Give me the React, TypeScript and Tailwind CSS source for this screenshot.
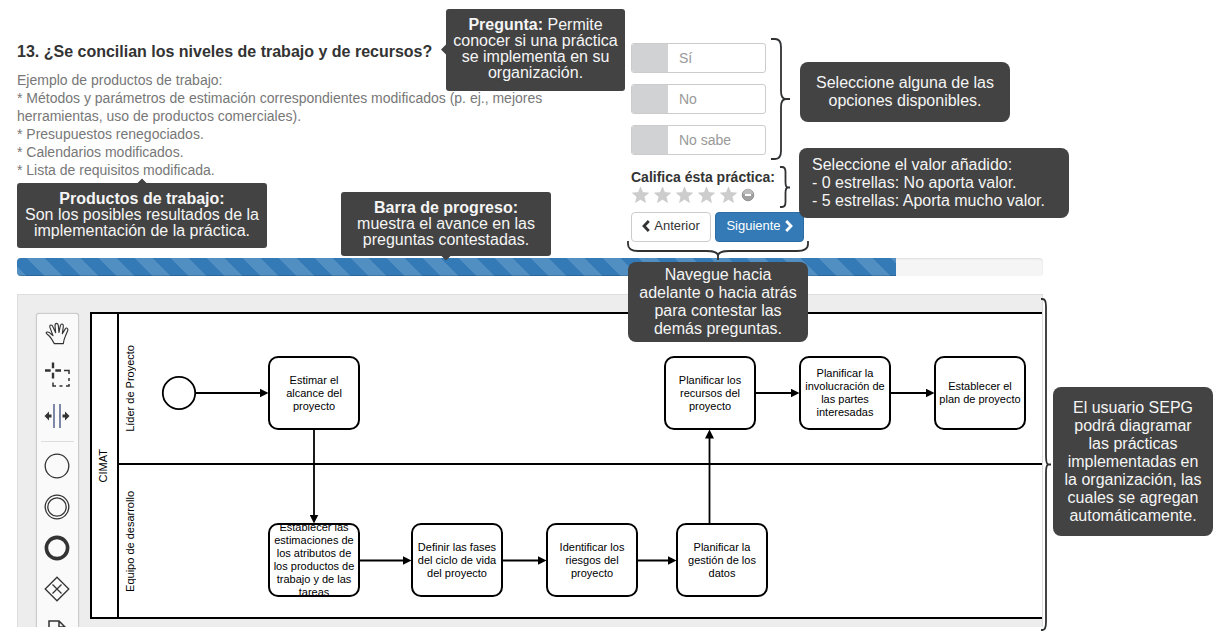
import { useState } from "react";
import type { ReactNode } from "react";

const OPTIONS = ["Sí", "No", "No sabe"];

const PRODUCTS = [
  "Ejemplo de productos de trabajo:",
  "* Métodos y parámetros de estimación correspondientes modificados (p. ej., mejores herramientas, uso de productos comerciales).",
  "* Presupuestos renegociados.",
  "* Calendarios modificados.",
  "* Lista de requisitos modificada.",
];

const TASKS = [
  { place: "left-[250px] top-[61px]", text: "Estimar el\nalcance del\nproyecto" },
  { place: "left-[646px] top-[61px]", text: "Planificar los\nrecursos del\nproyecto" },
  { place: "left-[781px] top-[61px]", text: "Planificar la\ninvolucración de\nlas partes\ninteresadas" },
  { place: "left-[916px] top-[61px]", text: "Establecer el\nplan de proyecto" },
  {
    place: "left-[250px] top-[228px]",
    text: "Establecer las\nestimaciones de\nlos atributos de\nlos productos de\ntrabajo y de las\ntareas",
  },
  { place: "left-[393px] top-[228px]", text: "Definir las fases\ndel ciclo de vida\ndel proyecto" },
  { place: "left-[528px] top-[228px]", text: "Identificar los\nriesgos del\nproyecto" },
  { place: "left-[658px] top-[228px]", text: "Planificar la\ngestión de los\ndatos" },
];

const FLOWS = [
  "M178 98H246",
  "M737 98H777",
  "M872 98H912",
  "M341 265.5H389",
  "M484 265.5H524",
  "M619 265.5H654",
  "M296 134V224",
  "M691.5 229V139",
];

function Option({ label, checked, onChange }: { label: string; checked: boolean; onChange: () => void }) {
  return (
    <label className="flex h-[30px] w-[135px] cursor-pointer overflow-hidden rounded-[3px] border border-[#ccc] bg-white text-sm text-[#999]">
      <input
        type="radio"
        name="respuesta"
        checked={checked}
        onChange={onChange}
        className="w-9 shrink-0 appearance-none bg-[#d1d2d4] checked:bg-[#337ab7]"
      />
      <span className="self-center pl-[11px]">{label}</span>
    </label>
  );
}

function Callout({ className, children }: { className: string; children: ReactNode }) {
  return (
    <div className={`absolute flex flex-col justify-center bg-[#434343] text-base text-[#f5f5f5] ${className}`}>
      {children}
    </div>
  );
}

function Tool({ label, children }: { label: string; children: ReactNode }) {
  return (
    <button type="button" aria-label={label} className="flex h-[41px] w-full shrink-0 items-center justify-center pb-[2px] pr-[2px]">
      <svg width="30" height="30" viewBox="0 0 30 30" fill="none" stroke="#333" strokeWidth="1.3">
        {children}
      </svg>
    </button>
  );
}

function Palette() {
  return (
    <div className="mt-px flex h-[400px] w-[43px] shrink-0 flex-col rounded-[3px] border border-[#ccc] bg-[#fafafa] shadow-[0_0_1px_#bbb]">
      <Tool label="Mano">
        <g transform="scale(0.33333) translate(-126 -86)" strokeWidth="3.4" strokeLinejoin="round">
          <path d="M163 160L154 145Q148 136 141 131Q136 127 141 125Q148 124 153 131L159 136L150 112Q148 105 152 104Q157 103 159 110L167 127L165 106Q165 99 170 99Q174 99 175 106L177 126L181 106Q183 100 187 101Q191 103 190 109L187 130L195 117Q199 111 202 114Q205 117 203 121L196 138Q192 146 190 160Z" />
        </g>
      </Tool>
      <Tool label="Lazo">
        <path d="M3 10.500H8.700M13.300 10.500H19M11 2.500V8.200M11 12.800V18.500" strokeWidth="2.400" />
        <path d="M22 10.500H27V14M27 18V21M27 24V26H24M20.500 26H17.500M14 26H11V22.500" strokeWidth="1.500" />
      </Tool>
      <Tool label="Espacio">
        <path d="M12 3V27M18 3V27" stroke="#3b4a7a" />
        <path d="M2.500 15L7 10.500V13.500H9.500V16.500H7V19.500ZM27.500 15L23 10.500V13.500H20.500V16.500H23V19.500Z" fill="#333" stroke="none" />
      </Tool>
      <hr className="mx-1 my-1 border-t border-[#ddd]" />
      <Tool label="Evento de inicio">
        <circle cx="15" cy="15" r="11.800" />
      </Tool>
      <Tool label="Evento intermedio">
        <circle cx="15" cy="15" r="11.800" />
        <circle cx="15" cy="15" r="9.200" />
      </Tool>
      <Tool label="Evento de fin">
        <circle cx="15" cy="15" r="10.600" strokeWidth="3.600" />
      </Tool>
      <Tool label="Compuerta">
        <path d="M15 3.200L26.800 15L15 26.800L3.200 15Z" />
        <path d="M10.500 10.500L19.500 19.500M19.500 10.500L10.500 19.500" />
      </Tool>
      <Tool label="Objeto de datos">
        <path d="M7 6H17L23 12V28H7ZM17 6V12H23" strokeWidth="1.500" />
      </Tool>
    </div>
  );
}

function Diagram() {
  return (
    <section className="relative mt-[18px] flex h-[333px] overflow-hidden border border-b-0 border-[#ddd] bg-[#ededed] pl-[18px] pt-[17px] text-[11px] leading-[13px] text-black">
      <Palette />
      <div className="ml-[11px] flex h-[307px] flex-1 border-2 border-r-0 border-black bg-white">
        <div className="flex w-[27px] shrink-0 items-center justify-center border-r-2 border-black pr-[2px]">
          <span className="rotate-180 [writing-mode:vertical-rl]">CIMAT</span>
        </div>
        <div className="flex flex-1 flex-col">
          <div className="flex h-[151px] shrink-0 items-center border-b-2 border-black pl-[5px]">
            <span className="rotate-180 [writing-mode:vertical-rl]">Líder de Proyecto</span>
          </div>
          <div className="flex flex-1 items-center pl-[5px]">
            <span className="rotate-180 [writing-mode:vertical-rl]">Equipo de desarrollo</span>
          </div>
        </div>
      </div>
      {TASKS.map((task) => (
        <div
          key={task.text}
          className={`absolute flex h-[74px] w-[92px] items-center justify-center whitespace-pre rounded-[10px] border-2 border-black bg-white text-center ${task.place}`}
        >
          {task.text}
        </div>
      ))}
      <svg className="pointer-events-none absolute left-0 top-0" width="1024" height="332" fill="none" stroke="#000" strokeWidth="1.800">
        <defs>
          <marker id="flecha" viewBox="0 0 10 10" refX="5" refY="5" markerWidth="9" markerHeight="9" markerUnits="userSpaceOnUse" orient="auto">
            <path d="M0 0L10 5L0 10Z" fill="#000" stroke="none" />
          </marker>
        </defs>
        <circle cx="161" cy="98" r="16.200" fill="#fff" />
        {FLOWS.map((d) => (
          <path key={d} d={d} markerEnd="url(#flecha)" />
        ))}
      </svg>
    </section>
  );
}

function Rating() {
  const [stars, setStars] = useState(0);
  return (
    <div className="flex h-[18px] items-center">
      {[1, 2, 3, 4, 5].map((n) => (
        <button key={n} type="button" aria-label={`${n} estrellas`} onClick={() => setStars(n)} className="w-[22px]">
          <svg width="20" height="18" viewBox="0 0 20 18" fill={n <= stars ? "#f0ad4e" : "#cdcdcd"} stroke="#c0c0c0" strokeWidth="0.500">
            <path d="M9.500 1L11.700 6.500L17.600 6.900L13.100 10.700L14.500 16.500L9.500 13.300L4.500 16.500L5.900 10.700L1.400 6.900L7.300 6.500Z" />
          </svg>
        </button>
      ))}
      <button type="button" aria-label="Quitar calificación" onClick={() => setStars(0)}>
        <svg width="14" height="14" viewBox="0 0 14 14">
          <circle cx="7" cy="7" r="5.800" fill="#a0a0a0" stroke="#858585" strokeWidth="0.800" />
          <path d="M2 6A5 5 0 0 1 12 6Z" fill="#bbb" />
          <path d="M4 7H10" stroke="#fff" strokeWidth="2" />
        </svg>
      </button>
    </div>
  );
}

export default function App() {
  const [answer, setAnswer] = useState("");
  return (
    <main className="relative min-h-screen bg-white pl-[17px] pr-[184px] pt-[41px] font-['Liberation_Sans',Arial,sans-serif] text-[#333]">
      <div className="flex">
        <div className="w-[614px] shrink-0 pr-10">
          <h1 className="text-base font-bold leading-[22px]">13. ¿Se concilian los niveles de trabajo y de recursos?</h1>
          <div className="mt-2 text-sm leading-[18px] text-[#777]">
            {PRODUCTS.map((line) => (
              <p key={line}>{line}</p>
            ))}
          </div>
        </div>
        <form className="shrink-0 pt-[2px]" onSubmit={(e) => e.preventDefault()}>
          <div className="flex flex-col gap-[11px]">
            {OPTIONS.map((o) => (
              <Option key={o} label={o} checked={answer === o} onChange={() => setAnswer(o)} />
            ))}
          </div>
          <p className="mt-[13px] text-sm font-bold leading-[18px]">Califica ésta práctica:</p>
          <Rating />
          <div className="mt-2 flex gap-1 text-[13px]">
            <button type="button" className="flex h-[30px] w-20 items-center justify-center gap-1 rounded border border-[#ccc] bg-white pb-[2px]">
              <svg width="8" height="12" viewBox="0 0 8 12" fill="none" stroke="#333" strokeWidth="2.800">
                <path d="M6.800 1L2 6L6.800 11" />
              </svg>
              Anterior
            </button>
            <button type="button" className="flex h-[30px] w-[89px] items-center justify-center gap-1 rounded border border-[#2e6da4] bg-[#337ab7] pb-[2px] text-white">
              Siguiente
              <svg width="8" height="12" viewBox="0 0 8 12" fill="none" stroke="#fff" strokeWidth="2.800">
                <path d="M1.200 1L6 6L1.200 11" />
              </svg>
            </button>
          </div>
        </form>
      </div>

      <div
        role="progressbar"
        aria-label="Progreso"
        aria-valuenow={86}
        className="mt-4 h-[18px] overflow-hidden rounded bg-[#f5f5f5] shadow-[inset_0_1px_2px_rgba(0,0,0,0.1)]"
      >
        <div className="h-full w-[85.7%] bg-[#337ab7] bg-[linear-gradient(45deg,rgba(255,255,255,.15)_25%,transparent_25%,transparent_50%,rgba(255,255,255,.15)_50%,rgba(255,255,255,.15)_75%,transparent_75%,transparent)] bg-[length:36px_36px] bg-[position:9px_0] shadow-[inset_0_-1px_0_rgba(0,0,0,0.15)]" />
      </div>

      <Diagram />

      <Callout className="left-[446px] top-[9px] h-[82px] w-[179px] rounded-[3px] pb-[2px] text-center leading-4">
        <p>
          <b>Pregunta:</b> Permite
          <br />
          conocer si una práctica
          <br />
          se implementa en su
          <br />
          organización.
        </p>
      </Callout>
      <Callout className="left-[17px] top-[183px] h-[65px] w-[250px] rounded-[3px] pb-[2px] text-center leading-4">
        <b>Productos de trabajo:</b>
        <p>
          Son los posibles resultados de la
          <br />
          implementación de la práctica.
        </p>
      </Callout>
      <Callout className="left-[341px] top-[192px] h-[64px] w-[210px] rounded-[3px] text-center leading-4">
        <b>Barra de progreso:</b>
        <p>
          muestra el avance en las
          <br />
          preguntas contestadas.
        </p>
      </Callout>
      <Callout className="left-[800px] top-[62px] h-[60px] w-[210px] rounded-[8px] text-center leading-[18px]">
        <p>
          Seleccione alguna de las
          <br />
          opciones disponibles.
        </p>
      </Callout>
      <Callout className="left-[799px] top-[148px] h-[70px] w-[270px] rounded-[8px] pl-[13px] leading-[18px]">
        <p>Seleccione el valor añadido:</p>
        <p>- 0 estrellas: No aporta valor.</p>
        <p>- 5 estrellas: Aporta mucho valor.</p>
      </Callout>
      <Callout className="left-[628px] top-[262px] h-[80px] w-[180px] rounded-[8px] text-center leading-[18px]">
        <p>
          Navegue hacia
          <br />
          adelante o hacia atrás
          <br />
          para contestar las
          <br />
          demás preguntas.
        </p>
      </Callout>
      <Callout className="left-[1053px] top-[387px] h-[149px] w-[160px] rounded-[8px] text-center leading-[18px]">
        <p>
          El usuario SEPG
          <br />
          podrá diagramar
          <br />
          las prácticas
          <br />
          implementadas en
          <br />
          la organización, las
          <br />
          cuales se agregan
          <br />
          automáticamente.
        </p>
      </Callout>

      <svg className="pointer-events-none absolute left-0 top-0" width="1227" height="636" fill="none" stroke="#2f3133" strokeWidth="1.800" aria-hidden="true">
        <path d="M441 49.500L446 44.500V54.500ZM137 183.500L142 178.500L147 183.500ZM441 255.500L446 260.500L451 255.500Z" fill="#434343" stroke="none" />
        <path d="M771 39H775Q781 39 781 47V91Q781 99 786 99H790M786 99Q781 99 781 107V151Q781 159 775 159H771" />
        <path d="M780 167H782Q785.500 167 785.500 172V182Q785.500 187.500 788 187.500H790M788 187.500Q785.500 187.500 785.500 193V202Q785.500 207 782 207H780" />
        <path d="M628 241V244Q628 251 638 251H706Q718 251 718 256V260M718 256Q718 251 730 251H797Q808 251 808 244V241" />
        <path d="M1041 299H1042.500Q1046 299 1046 306V456Q1046 464.500 1048.500 464.500H1051M1048.500 464.500Q1046 464.500 1046 473V622Q1046 630 1042.500 630H1041" />
      </svg>
    </main>
  );
}
